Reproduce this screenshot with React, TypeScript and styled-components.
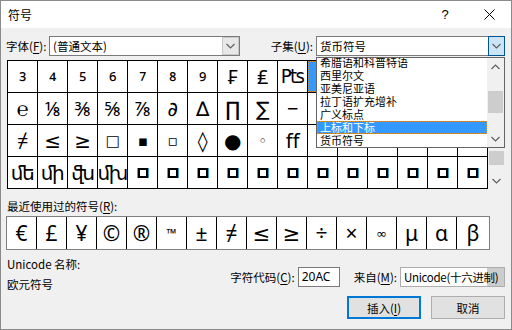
import React from "react";
import styled, { createGlobalStyle } from "styled-components";

const GRID: string[][] = [
  ["³", "⁴", "⁵", "⁶", "⁷", "⁸", "⁹", "₣", "₤", "₧", "€", "₹", "№", "™", "Ω", "℮"],
  ["℮", "⅛", "⅜", "⅝", "⅞", "∂", "∆", "∏", "∑", "−", "∕", "∙", "√", "∞", "∟", "∩"],
  ["≠", "≤", "≥", "□", "▪", "▫", "◊", "●", "◦", "ﬀ", "ﬁ", "ﬂ", "ﬃ", "ﬄ", "ﬆ", "ﬓ"],
  ["ﬔ", "ﬕ", "ﬖ", "ﬗ", "", "", "", "", "", "", "", "", "", "", "", ""],
];

// glyphs that the reference draws smaller than the rest
const SMALL_GLYPHS = "□▪▫◦";
// glyphs whose Noto Sans shape is too wide for a cell
const DEJAVU_GLYPHS = "₧";

const RECENT = ["€", "£", "¥", "©", "®", "™", "±", "≠", "≤", "≥", "÷", "×", "∞", "μ", "α", "β"];

const SUBSETS = ["希腊语和科普特语", "西里尔文", "亚美尼亚语", "拉丁语扩充增补", "广义标点", "上标和下标", "货币符号"];

const Chevron = ({ up }: { up?: boolean }) => (
  <svg width="9" height="6" viewBox="0 0 9 6">
    <polyline
      points={up ? "0.5,5 4.5,1 8.5,5" : "0.5,1 4.5,5 8.5,1"}
      fill="none"
      stroke="#606060"
      strokeWidth="1.2"
    />
  </svg>
);

const App: React.FC = () => {
  return (
    <Window>
      <GlobalStyle />
      <TitleBar>
        <Title>符号</Title>
        <TitleButton>?</TitleButton>
        <TitleButton>
          <svg width="11" height="11" viewBox="0 0 11 11">
            <path d="M0.5 0.5 L10.5 10.5 M10.5 0.5 L0.5 10.5" stroke="#000" strokeWidth="1" />
          </svg>
        </TitleButton>
      </TitleBar>

      <Body>
        <FontRow>
          <Label $width={43}>
            字体(<u>F</u>):
          </Label>
          <Select $width={191}>
            <SelectValue>(普通文本)</SelectValue>
            <ArrowBox>
              <Chevron />
            </ArrowBox>
          </Select>
          <Label $push>
            子集(<u>U</u>):
          </Label>
          <Select $width={189}>
            <SelectValue>货币符号</SelectValue>
            <ArrowBox $active>
              <Chevron />
            </ArrowBox>
          </Select>
        </FontRow>

        <GridWrap>
          <CharGrid>
            {GRID.map((row, r) =>
              row.map((ch, c) => (
                <Cell key={`${r}-${c}`} $selected={r === 0 && c === 10}>
                  {ch ? (
                    <Glyph
                      $sup={r === 0 && c < 7}
                      $small={SMALL_GLYPHS.includes(ch)}
                      $alt={DEJAVU_GLYPHS.includes(ch)}
                    >
                      {ch}
                    </Glyph>
                  ) : (
                    <Tofu />
                  )}
                </Cell>
              ))
            )}
          </CharGrid>
          <ScrollBar>
            <ScrollArrow>
              <Chevron up />
            </ScrollArrow>
            <ScrollTrack $thumbTop={74} $thumbHeight={14}>
              <Thumb />
            </ScrollTrack>
            <ScrollArrow>
              <Chevron />
            </ScrollArrow>
          </ScrollBar>
        </GridWrap>

        <RecentLabel>
          最近使用过的符号(<u>R</u>):
        </RecentLabel>
        <RecentRow>
          {RECENT.map((ch, i) => (
            <RecentCell key={i} $small={ch === "™" || ch === "∞"}>
              {ch}
            </RecentCell>
          ))}
        </RecentRow>

        <BottomArea>
          <InfoColumn>
            <div>Unicode 名称:</div>
            <div>欧元符号</div>
          </InfoColumn>
          <ControlColumn>
            <CodeRow>
              <Label>
                字符代码(<u>C</u>):
              </Label>
              <TextInput>20AC</TextInput>
              <Label $gap={11}>
                来自(<u>M</u>):
              </Label>
              <FromSelect>Unicode(十六进制)</FromSelect>
            </CodeRow>
            <ButtonRow>
              <Button $default>
                插入(<u>I</u>)
              </Button>
              <Button>取消</Button>
            </ButtonRow>
          </ControlColumn>
        </BottomArea>
      </Body>

      <DropList>
        <ListItems>
          {SUBSETS.map((s) => (
            <ListItem key={s} $active={s === "上标和下标"}>
              {s}
            </ListItem>
          ))}
        </ListItems>
        <ScrollBar>
          <ScrollArrow>
            <Chevron up />
          </ScrollArrow>
          <ScrollTrack $thumbTop={16} $thumbHeight={22}>
            <Thumb />
          </ScrollTrack>
          <ScrollArrow>
            <Chevron />
          </ScrollArrow>
        </ScrollBar>
      </DropList>
    </Window>
  );
};

// css

const GlobalStyle = createGlobalStyle`
  html, body {
    margin: 0;
    padding: 0;
    background: #ffffff;
  }
  body {
    font-family: "Noto Sans CJK SC", "Noto Sans", sans-serif;
    font-size: 11.5px;
    color: #000;
  }
  u {
    text-underline-offset: 2px;
  }
`;

const Window = styled.div`
  position: relative;
  width: 512px;
  height: 330px;
  box-sizing: border-box;
  border: 1px solid #8a8a8a;
  background: #f0f0f0;
  display: flex;
  flex-direction: column;
  overflow: hidden;
`;

const TitleBar = styled.div`
  height: 27px;
  background: #ffffff;
  display: flex;
  align-items: center;
  padding-left: 7px;
`;

const Title = styled.div`
  flex: 1;
  font-size: 12px;
`;

const TitleButton = styled.div`
  width: 44px;
  height: 27px;
  display: flex;
  align-items: center;
  justify-content: center;
  font-family: "Liberation Sans", sans-serif;
  font-size: 13px;
`;

const Body = styled.div`
  flex: 1;
  display: flex;
  flex-direction: column;
  padding: 8px 6px 0 5px;
`;

const FontRow = styled.div`
  display: flex;
  align-items: center;
  height: 20px;
`;

const Label = styled.div<{ $width?: number; $push?: boolean; $gap?: number }>`
  white-space: nowrap;
  line-height: 16px;
  width: ${(p) => (p.$width ? `${p.$width}px` : "auto")};
  margin-left: ${(p) => (p.$push ? "auto" : p.$gap ? `${p.$gap}px` : "0")};
  margin-right: ${(p) => (p.$push ? "3px" : "0")};
`;

const RecentLabel = styled.div`
  line-height: 16px;
  margin-top: 9px;
  padding-left: 1px;
`;

const Select = styled.div<{ $width: number }>`
  width: ${(p) => p.$width}px;
  height: 20px;
  box-sizing: border-box;
  border: 1px solid #7a7a7a;
  background: #ffffff;
  display: flex;
  align-items: stretch;
`;

const SelectValue = styled.div`
  flex: 1;
  padding-left: 3px;
  line-height: 18px;
  white-space: nowrap;
`;

const ArrowBox = styled.div<{ $active?: boolean }>`
  width: 17px;
  box-sizing: border-box;
  display: flex;
  align-items: center;
  justify-content: center;
  background: ${(p) => (p.$active ? "#cce4f7" : "#e8e8e8")};
  border: 1px solid ${(p) => (p.$active ? "#005499" : "#c8c8c8")};
  margin: ${(p) => (p.$active ? "-1px -1px -1px 0" : "0")};
`;

const GridWrap = styled.div`
  display: flex;
  align-items: flex-start;
  margin-top: 4px;
  margin-left: 1px;
`;

const CharGrid = styled.div`
  display: grid;
  grid-template-columns: repeat(16, 29px);
  grid-template-rows: repeat(4, 31px);
  gap: 1px;
  padding: 1px;
  background: #000;
`;

const Cell = styled.div<{ $selected?: boolean }>`
  display: flex;
  align-items: center;
  justify-content: center;
  overflow: hidden;
  background: ${(p) => (p.$selected ? "#3399ff" : "#ffffff")};
  color: ${(p) => (p.$selected ? "#ffffff" : "#000")};
  outline: ${(p) => (p.$selected ? "1px dotted #d89030" : "none")};
  outline-offset: -1px;
  font-family: "Noto Sans", "DejaVu Sans", sans-serif;
  white-space: nowrap;
`;

const Glyph = styled.span<{ $sup?: boolean; $small?: boolean; $alt?: boolean }>`
  font-family: ${(p) => (p.$alt ? '"DejaVu Sans", sans-serif' : "inherit")};
  font-size: ${(p) => (p.$small ? "15px" : p.$alt ? "19px" : "20px")};
  line-height: 1;
  letter-spacing: -0.5px;
  transform: ${(p) => (p.$sup ? "translateY(5px)" : "none")};
`;

const Tofu = styled.span`
  width: 6px;
  height: 6px;
  border: 2px solid #000;
  box-shadow: -1px 0 0 #e07a20, 1px 0 0 #3a9ad9;
`;

const ScrollBar = styled.div`
  width: 17px;
  align-self: stretch;
  background: #f0f0f0;
  display: flex;
  flex-direction: column;
`;

const ScrollArrow = styled.div`
  height: 17px;
  flex-shrink: 0;
  display: flex;
  align-items: center;
  justify-content: center;
`;

const ScrollTrack = styled.div<{ $thumbTop: number; $thumbHeight: number }>`
  flex: 1;
  min-height: 0;
  overflow: hidden;
  padding-top: ${(p) => p.$thumbTop}px;
  & > div {
    height: ${(p) => p.$thumbHeight}px;
  }
`;

const Thumb = styled.div`
  margin: 0 1px;
  background: #cdcdcd;
`;

const RecentRow = styled.div`
  display: flex;
  width: 484px;
  height: 34px;
  box-sizing: border-box;
  border: 1px solid #7f7f7f;
  background: #ffffff;
  margin-top: 2px;
`;

const RecentCell = styled.div<{ $small?: boolean }>`
  width: 29px;
  border-right: 1px solid #000;
  display: flex;
  align-items: ${(p) => (p.$small ? "flex-start" : "center")};
  justify-content: center;
  padding-top: ${(p) => (p.$small ? "7px" : "0")};
  box-sizing: content-box;
  font-family: "Noto Sans", "DejaVu Sans", sans-serif;
  font-size: ${(p) => (p.$small ? "13px" : "21px")};
  &:last-child {
    flex: 1;
    border-right: none;
  }
`;

const BottomArea = styled.div`
  display: flex;
  margin-top: 4px;
`;

const InfoColumn = styled.div`
  flex: 1;
  line-height: 20px;
  padding-left: 1px;
`;

const ControlColumn = styled.div`
  display: flex;
  flex-direction: column;
  align-items: flex-end;
  padding-top: 13px;
`;

const CodeRow = styled.div`
  display: flex;
  align-items: center;
  height: 20px;
  gap: 3px;
`;

const TextInput = styled.div`
  width: 42px;
  height: 20px;
  box-sizing: border-box;
  border: 1px solid #7a7a7a;
  background: #ffffff;
  padding-left: 3px;
  line-height: 18px;
  font-family: "Noto Sans", sans-serif;
  font-size: 12px;
`;

const FromSelect = styled.div`
  width: 105px;
  height: 20px;
  box-sizing: border-box;
  border: 1px solid #adadad;
  background: linear-gradient(to right, #ffffff calc(100% - 17px), #cccccc 0);
  padding-left: 3px;
  line-height: 18px;
  white-space: nowrap;
  font-size: 11.5px;
  letter-spacing: -0.3px;
`;

const ButtonRow = styled.div`
  display: flex;
  gap: 10px;
  margin-top: 9px;
`;

const Button = styled.div<{ $default?: boolean }>`
  width: 74px;
  height: 23px;
  box-sizing: border-box;
  display: flex;
  align-items: center;
  justify-content: center;
  background: #e1e1e1;
  border: ${(p) => (p.$default ? "2px solid #0078d7" : "1px solid #adadad")};
`;

const DropList = styled.div`
  position: absolute;
  left: 315px;
  top: 56px;
  width: 189px;
  height: 91px;
  box-sizing: border-box;
  border: 1px solid #646464;
  background: #ffffff;
  display: flex;
`;

const ListItems = styled.div`
  flex: 1;
  display: flex;
  flex-direction: column;
  justify-content: flex-end;
  overflow: hidden;
`;

const ListItem = styled.div<{ $active?: boolean }>`
  height: 13px;
  flex-shrink: 0;
  overflow: hidden;
  font-size: 11px;
  line-height: 13px;
  padding-left: 3px;
  white-space: nowrap;
  background: ${(p) => (p.$active ? "#3399ff" : "transparent")};
  color: ${(p) => (p.$active ? "#ffffff" : "#000")};
  outline: ${(p) => (p.$active ? "1px dotted #d89030" : "none")};
  outline-offset: -1px;
`;

export default App;
